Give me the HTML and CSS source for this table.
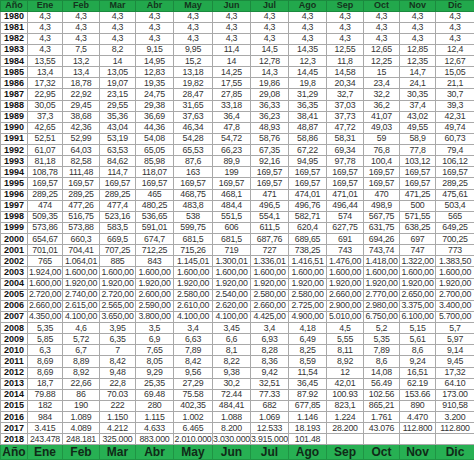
FILE: index.html
```html
<!DOCTYPE html>
<html lang="es">
<head>
<meta charset="utf-8">
<title>Tabla</title>
<link rel="stylesheet" href="styles.css">
</head>
<body>
<table class="grid">
<colgroup>
<col class="c-year"><col class="c-ene"><col class="c-feb"><col class="c-mar"><col class="c-abr"><col class="c-may"><col class="c-jun"><col class="c-jul"><col class="c-ago"><col class="c-sep"><col class="c-oct"><col class="c-nov"><col class="c-dic">
</colgroup>
<thead>
<tr class="head"><th>Año</th><th>Ene</th><th>Feb</th><th>Mar</th><th>Abr</th><th>May</th><th>Jun</th><th>Jul</th><th>Ago</th><th>Sep</th><th>Oct</th><th>Nov</th><th>Dic</th></tr>
</thead>
<tbody>
<tr><th>1980</th><td>4,3</td><td>4,3</td><td>4,3</td><td>4,3</td><td>4,3</td><td>4,3</td><td>4,3</td><td>4,3</td><td>4,3</td><td>4,3</td><td>4,3</td><td>4,3</td></tr>
<tr><th>1981</th><td>4,3</td><td>4,3</td><td>4,3</td><td>4,3</td><td>4,3</td><td>4,3</td><td>4,3</td><td>4,3</td><td>4,3</td><td>4,3</td><td>4,3</td><td>4,3</td></tr>
<tr><th>1982</th><td>4,3</td><td>4,3</td><td>4,3</td><td>4,3</td><td>4,3</td><td>4,3</td><td>4,3</td><td>4,3</td><td>4,3</td><td>4,3</td><td>4,3</td><td>4,3</td></tr>
<tr><th>1983</th><td>4,3</td><td>7,5</td><td>8,2</td><td>9,15</td><td>9,95</td><td>11,4</td><td>14,5</td><td>14,35</td><td>12,55</td><td>12,65</td><td>12,85</td><td>12,4</td></tr>
<tr><th>1984</th><td>13,55</td><td>13,2</td><td>14</td><td>14,95</td><td>15,2</td><td>14</td><td>12,78</td><td>12,3</td><td>11,8</td><td>12,25</td><td>12,35</td><td>12,67</td></tr>
<tr><th>1985</th><td>13,4</td><td>13,4</td><td>13,05</td><td>12,83</td><td>13,18</td><td>14,25</td><td>14,3</td><td>14,45</td><td>14,58</td><td>15</td><td>14,7</td><td>15,05</td></tr>
<tr><th>1986</th><td>17,32</td><td>18,78</td><td>19,07</td><td>19,35</td><td>19,82</td><td>17,55</td><td>19,86</td><td>19,8</td><td>20,34</td><td>23,4</td><td>24,1</td><td>21,1</td></tr>
<tr><th>1987</th><td>22,95</td><td>22,92</td><td>23,15</td><td>24,75</td><td>28,47</td><td>27,85</td><td>29,08</td><td>31,29</td><td>32,7</td><td>32,2</td><td>30,35</td><td>30,7</td></tr>
<tr><th>1988</th><td>30,05</td><td>29,45</td><td>29,55</td><td>29,38</td><td>31,65</td><td>33,18</td><td>36,33</td><td>36,35</td><td>37,03</td><td>36,2</td><td>37,4</td><td>39,3</td></tr>
<tr><th>1989</th><td>37,3</td><td>38,68</td><td>35,36</td><td>36,69</td><td>37,63</td><td>36,4</td><td>36,23</td><td>38,41</td><td>37,73</td><td>41,07</td><td>43,02</td><td>42,31</td></tr>
<tr><th>1990</th><td>42,65</td><td>42,36</td><td>43,04</td><td>44,36</td><td>46,34</td><td>47,8</td><td>48,93</td><td>48,87</td><td>47,72</td><td>49,03</td><td>49,55</td><td>49,74</td></tr>
<tr><th>1991</th><td>52,51</td><td>52,99</td><td>53,19</td><td>54,08</td><td>54,28</td><td>54,72</td><td>58,76</td><td>58,86</td><td>58,31</td><td>59</td><td>58,9</td><td>60,73</td></tr>
<tr><th>1992</th><td>61,07</td><td>64,03</td><td>63,53</td><td>65,05</td><td>65,53</td><td>66,23</td><td>67,35</td><td>67,22</td><td>69,34</td><td>76,8</td><td>77,8</td><td>79,4</td></tr>
<tr><th>1993</th><td>81,18</td><td>82,58</td><td>84,62</td><td>85,98</td><td>87,6</td><td>89,9</td><td>92,16</td><td>94,95</td><td>97,78</td><td>100,4</td><td>103,12</td><td>106,12</td></tr>
<tr><th>1994</th><td>108,78</td><td>111,48</td><td>114,7</td><td>118,07</td><td>163</td><td>199</td><td>169,57</td><td>169,57</td><td>169,57</td><td>169,57</td><td>169,57</td><td>169,57</td></tr>
<tr><th>1995</th><td>169,57</td><td>169,57</td><td>169,57</td><td>169,57</td><td>169,57</td><td>169,57</td><td>169,57</td><td>169,57</td><td>169,57</td><td>169,57</td><td>169,57</td><td>289,25</td></tr>
<tr><th>1996</th><td>289,25</td><td>289,25</td><td>289,25</td><td>465</td><td>468,75</td><td>468,1</td><td>471</td><td>474,01</td><td>471,01</td><td>470</td><td>471,25</td><td>475,61</td></tr>
<tr><th>1997</th><td>474</td><td>477,26</td><td>477,4</td><td>480,25</td><td>483,8</td><td>484,4</td><td>496,5</td><td>496,76</td><td>496,44</td><td>498,9</td><td>500</td><td>503,4</td></tr>
<tr><th>1998</th><td>509,35</td><td>516,75</td><td>523,16</td><td>536,65</td><td>538</td><td>551,5</td><td>554,1</td><td>582,71</td><td>574</td><td>567,75</td><td>571,55</td><td>565</td></tr>
<tr><th>1999</th><td>573,86</td><td>573,88</td><td>583,5</td><td>591,01</td><td>599,75</td><td>606</td><td>611,5</td><td>620,4</td><td>627,75</td><td>631,75</td><td>638,25</td><td>649,25</td></tr>
<tr><th>2000</th><td>654,67</td><td>660,3</td><td>669,5</td><td>674,7</td><td>681,5</td><td>681,5</td><td>687,76</td><td>689,65</td><td>691</td><td>694,26</td><td>697</td><td>700,25</td></tr>
<tr><th>2001</th><td>701,01</td><td>704,41</td><td>707,25</td><td>712,25</td><td>715,26</td><td>719</td><td>727</td><td>738,25</td><td>743</td><td>743,74</td><td>747</td><td>773</td></tr>
<tr><th>2002</th><td>765</td><td>1.064,01</td><td>885</td><td>843</td><td>1.145,01</td><td>1.300,01</td><td>1.336,01</td><td>1.416,51</td><td>1.476,00</td><td>1.418,00</td><td>1.322,00</td><td>1.383,50</td></tr>
<tr><th>2003</th><td>1.924,00</td><td>1.600,00</td><td>1.600,00</td><td>1.600,00</td><td>1.600,00</td><td>1.600,00</td><td>1.600,00</td><td>1.600,00</td><td>1.600,00</td><td>1.600,00</td><td>1.600,00</td><td>1.600,00</td></tr>
<tr><th>2004</th><td>1.600,00</td><td>1.920,00</td><td>1.920,00</td><td>1.920,00</td><td>1.920,00</td><td>1.920,00</td><td>1.920,00</td><td>1.920,00</td><td>1.920,00</td><td>1.920,00</td><td>1.920,00</td><td>1.920,00</td></tr>
<tr><th>2005</th><td>2.720,00</td><td>2.740,00</td><td>2.720,00</td><td>2.600,00</td><td>2.580,00</td><td>2.540,00</td><td>2.580,00</td><td>2.580,00</td><td>2.660,00</td><td>2.770,00</td><td>2.650,00</td><td>2.700,00</td></tr>
<tr><th>2006</th><td>2.660,00</td><td>2.615,00</td><td>2.565,00</td><td>2.590,00</td><td>2.610,00</td><td>2.620,00</td><td>2.660,00</td><td>2.725,00</td><td>2.900,00</td><td>2.980,00</td><td>3.375,00</td><td>3.400,00</td></tr>
<tr><th>2007</th><td>4.350,00</td><td>4.100,00</td><td>3.650,00</td><td>3.800,00</td><td>4.100,00</td><td>4.100,00</td><td>4.425,00</td><td>4.900,00</td><td>5.010,00</td><td>6.750,00</td><td>6.100,00</td><td>5.700,00</td></tr>
<tr><th>2008</th><td>5,35</td><td>4,6</td><td>3,95</td><td>3,5</td><td>3,4</td><td>3,45</td><td>3,4</td><td>4,18</td><td>4,5</td><td>5,2</td><td>5,15</td><td>5,7</td></tr>
<tr><th>2009</th><td>5,85</td><td>5,72</td><td>6,35</td><td>6,9</td><td>6,63</td><td>6,6</td><td>6,93</td><td>6,49</td><td>5,55</td><td>5,35</td><td>5,61</td><td>5,97</td></tr>
<tr><th>2010</th><td>6,3</td><td>6,7</td><td>7</td><td>7,65</td><td>7,89</td><td>8,1</td><td>8,28</td><td>8,25</td><td>8,11</td><td>7,89</td><td>8,6</td><td>9,14</td></tr>
<tr><th>2011</th><td>8,69</td><td>8,89</td><td>8,42</td><td>8,05</td><td>8,42</td><td>8,22</td><td>8,36</td><td>8,59</td><td>8,92</td><td>8,6</td><td>9,24</td><td>9,45</td></tr>
<tr><th>2012</th><td>8,69</td><td>8,92</td><td>9,48</td><td>9,29</td><td>9,56</td><td>9,38</td><td>9,42</td><td>11,54</td><td>12</td><td>14,08</td><td>16,51</td><td>17,32</td></tr>
<tr><th>2013</th><td>18,7</td><td>22,66</td><td>22,8</td><td>25,35</td><td>27,29</td><td>30,2</td><td>32,51</td><td>36,45</td><td>42,01</td><td>56.49</td><td>62.19</td><td>64.10</td></tr>
<tr><th>2014</th><td>79.88</td><td>86</td><td>70.03</td><td>69.48</td><td>75.58</td><td>72.44</td><td>77.33</td><td>87.92</td><td>100.93</td><td>102.56</td><td>153.66</td><td>173.00</td></tr>
<tr><th>2015</th><td>182</td><td>190</td><td>222</td><td>280</td><td>402,35</td><td>484,41</td><td>682</td><td>677,85</td><td>823,1</td><td>865,21</td><td>890</td><td>910,58</td></tr>
<tr><th>2016</th><td>984</td><td>1.089</td><td>1.150</td><td>1.115</td><td>1.002</td><td>1.088</td><td>1.069</td><td>1.146</td><td>1.224</td><td>1.761</td><td>4.470</td><td>3.200</td></tr>
<tr><th>2017</th><td>3.415</td><td>4.089</td><td>4.212</td><td>4.633</td><td>6.465</td><td>8.200</td><td>12.533</td><td>18.193</td><td>28.200</td><td>43.076</td><td>112.800</td><td>112.800</td></tr>
<tr><th>2018</th><td>243.478</td><td>248.181</td><td>325.000</td><td>883.000</td><td>2.010.000</td><td>3.030.000</td><td>3.915.000</td><td>101.48</td><td></td><td></td><td></td><td></td></tr>
</tbody>
<tfoot>
<tr class="foot"><th>Año</th><th>Ene</th><th>Feb</th><th>Mar</th><th>Abr</th><th>May</th><th>Jun</th><th>Jul</th><th>Ago</th><th>Sep</th><th>Oct</th><th>Nov</th><th>Dic</th></tr>
</tfoot>
</table>
</body>
</html>
```
FILE: styles.css
```css
html, body {
  margin: 0;
  padding: 0;
  background: #ffffff;
}

.grid {
  width: 474px;
  table-layout: fixed;
  border-collapse: collapse;
  font-family: "Liberation Sans", Arial, sans-serif;
  font-size: 9px;
  color: #333333;
}

.c-year { width: 27px; }
.c-ene { width: 35px; }
.c-feb { width: 37px; }
.c-mar { width: 36px; }
.c-abr { width: 38px; }
.c-may { width: 39px; }
.c-jun { width: 38px; }
.c-jul { width: 38px; }
.c-ago { width: 38px; }
.c-sep { width: 37px; }
.c-oct { width: 36px; }
.c-nov { width: 36px; }
.c-dic { width: 39px; }

.grid td,
.grid th {
  padding: 0;
  border: 1px solid #a9a9a9;
  text-align: center;
  white-space: nowrap;
  overflow: hidden;
  line-height: 9px;
}

.grid td {
  font-size: 8.8px;
  letter-spacing: -0.25px;
}

.grid tbody tr {
  height: 11.13px;
}

.grid tbody th {
  font-weight: bold;
  color: #111111;
}

.head {
  height: 10.5px;
  background: #22a84c;
}

.head th {
  font-weight: bold;
  color: #14331c;
  border-color: #1b8a3e;
}

.foot {
  height: 15px;
  background: #27b053;
}

.foot th {
  font-size: 12px;
  line-height: 13px;
  font-weight: bold;
  color: #102a17;
  border-color: #1f9444;
}
```
